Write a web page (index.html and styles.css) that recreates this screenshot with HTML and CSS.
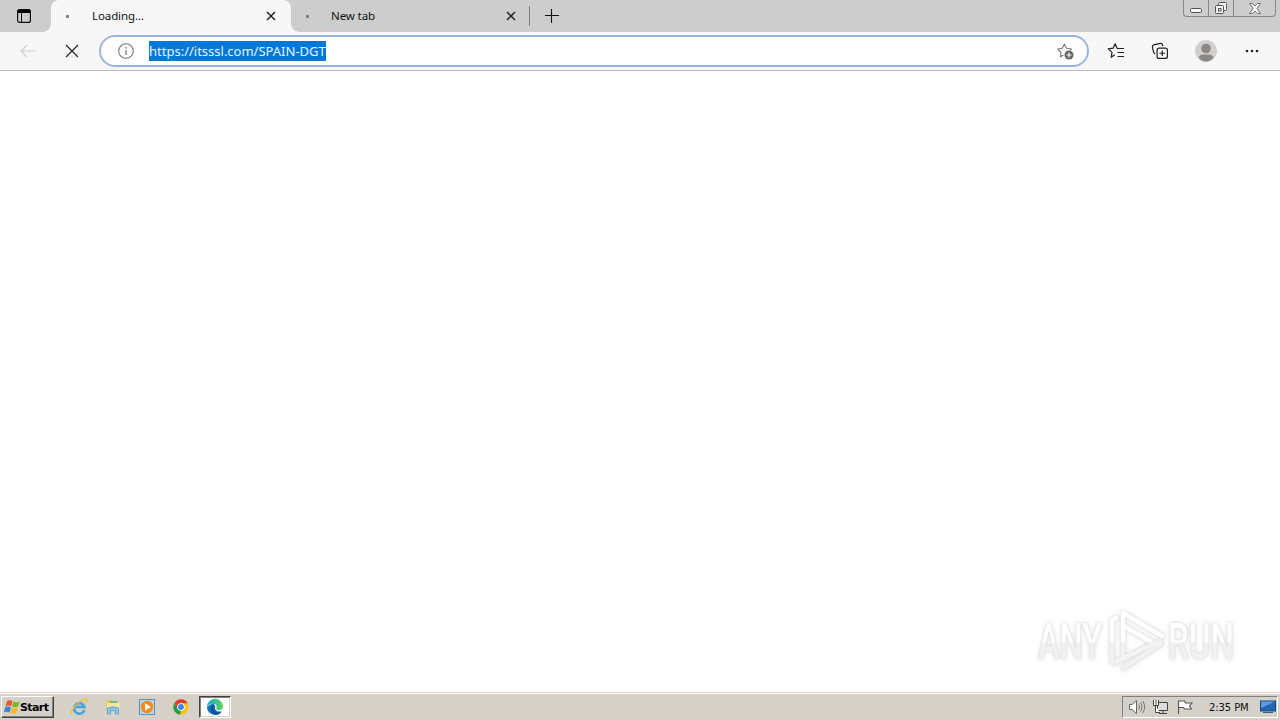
FILE: index.html
```html
<!DOCTYPE html>
<html lang="en">
<head>
    <meta charset="UTF-8">
    <meta name="viewport" content="width=device-width, initial-scale=1.0">
    <title>New tab</title>
    <link rel="stylesheet" href="styles.css">
</head>
<body>
    <header class="tab-strip">
        <div class="tab-actions">
            <svg width="16" height="16" viewBox="0 0 16 16"><rect x="1.6" y="1.6" width="12.8" height="12.8" rx="2" fill="none" stroke="#111" stroke-width="1.2"/><path d="M1.5 5V3.2Q1.5 1.5 3.2 1.5H12.8Q14.5 1.5 14.5 3.2V5Z" fill="#000"/><path d="M5.5 5V14" stroke="#111"/></svg>
        </div>
        <div class="tab active">
            <span class="spinner"></span>
            <span class="tab-title">Loading...</span>
            <svg class="tab-close" width="10" height="10" viewBox="0 0 10 10"><path d="M1 1L9 9M9 1L1 9" stroke="#222" stroke-width="1.5"/></svg>
        </div>
        <div class="tab">
            <span class="spinner"></span>
            <span class="tab-title">New tab</span>
            <svg class="tab-close" width="10" height="10" viewBox="0 0 10 10"><path d="M1 1L9 9M9 1L1 9" stroke="#222" stroke-width="1.5"/></svg>
        </div>
        <svg class="new-tab" width="14" height="14" viewBox="0 0 14 14"><path d="M0 6.5H14M6.5 0V14" stroke="#111" stroke-width="1.1"/></svg>
        <div class="window-buttons">
            <span class="win-btn minimize"><svg width="12" height="5" viewBox="0 0 12 5"><rect x=".5" y=".5" width="11" height="4" rx="1" fill="#f6f6f6" stroke="#555"/></svg></span>
            <span class="win-btn restore"><svg width="14" height="14" viewBox="0 0 14 14"><g fill="#f2f2f2" stroke="#555"><rect x="4.5" y="1.5" width="8" height="8" rx="1"/><rect x="1.5" y="4.5" width="8" height="8" rx="1"/><rect x="4.5" y="7.5" width="2.5" height="2.5"/></g></svg></span>
            <span class="win-btn close"><svg width="12" height="11" viewBox="0 0 12 11"><path d="M.5 .5H3.7L6 3L8.3 .5H11.5L7.9 5.5L11.5 10.5H8.3L6 8L3.7 10.5H.5L4.1 5.5Z" fill="#f4f4f4" stroke="#666" stroke-width=".9"/></svg></span>
        </div>
    </header>

    <nav class="toolbar">
        <svg class="back" width="16" height="14" viewBox="0 0 16 14"><path d="M16 7H1M7 1L1 7L7 13" fill="none" stroke="#cfcfcf" stroke-width="1.2"/></svg>
        <svg class="stop" width="14" height="14" viewBox="0 0 14 14"><path d="M1 1L13 13M13 1L1 13" stroke="#222" stroke-width="1.2"/></svg>
        <div class="address-bar">
            <svg width="16" height="16" viewBox="0 0 16 16"><circle cx="8" cy="8" r="7.3" fill="none" stroke="#777" stroke-width="1.1"/><path d="M8 7V12M8 4V5.6" stroke="#777" stroke-width="1.3"/></svg>
            <span class="url">https://itsssl.com/SPAIN-DGT</span>
            <svg class="add-favorite" width="19" height="18" viewBox="0 0 19 18"><path d="M7.5 13L4.4 14.8L5 10.4L1.8 7L6.2 6.3L8.4 2.2L10.6 6.3L15.4 7L14 8.3" fill="none" stroke="#777" stroke-width="1.1" stroke-linejoin="round"/><circle cx="13" cy="13" r="4.5" fill="#656565"/><path d="M10.5 13H15.5M13 10.5V15.5" stroke="#fff" stroke-width="1.1"/></svg>
        </div>
        <svg class="favorites" width="18" height="18" viewBox="0 0 18 18"><path d="M7.8 12.8L4.2 15.3L5 10.4L1.2 6.9L6.2 6.2L8.1 1.8L10.2 6.5H17M10.5 10.5H17M10.5 14.5H17" fill="none" stroke="#222" stroke-width="1.2" stroke-linejoin="round"/></svg>
        <svg class="collections" width="18" height="18" viewBox="0 0 18 18"><g fill="none" stroke="#222" stroke-width="1.2"><rect x="6.1" y="6.1" width="10.3" height="10.3" rx="2"/><path d="M11.25 8.5V14M8.5 11.25H14M4.2 12L3 10.8Q2.6 10.4 2.4 9.6L1.4 5Q1.2 3.4 2.7 2.9L9.3 1.4Q10.8 1.2 11.4 2.5L12 4.2"/></g></svg>
        <svg class="profile" width="22" height="22" viewBox="0 0 22 22"><circle cx="11" cy="11" r="11" fill="#d2d0ce"/><circle cx="11" cy="8.5" r="4.8" fill="#8a8785"/><path d="M3.5 17.2Q5 14.5 7.5 14.5H14.5Q17 14.5 18.5 17.2Q15.5 21.5 11 21.5T3.5 17.2Z" fill="#8a8785"/></svg>
        <svg class="more" width="14" height="4" viewBox="0 0 14 4"><g fill="#222"><circle cx="2" cy="2" r="1.3"/><circle cx="7" cy="2" r="1.3"/><circle cx="12" cy="2" r="1.3"/></g></svg>
    </nav>

    <main class="page">
        <svg class="watermark" width="204" height="70" viewBox="0 0 204 70">
            <defs>
                <linearGradient id="fade" gradientUnits="userSpaceOnUse" x1="0" y1="0" x2="0" y2="70"><stop offset=".53" stop-color="#fff"/><stop offset=".54" stop-color="#f1f1f1"/></linearGradient>
            </defs>
            <g fill="url(#fade)">
                <text x="5" y="54" textLength="64" lengthAdjust="spacingAndGlyphs">ANY</text>
                <text x="135" y="54" textLength="66" lengthAdjust="spacingAndGlyphs">RUN</text>
            </g>
            <g fill="none" stroke="url(#fade)" stroke-width="4.5" stroke-linejoin="round" stroke-linecap="round">
                <path d="M83 13L79 15V56"/>
                <path d="M90 51V8L129 31"/>
                <path d="M91 21L118 37"/>
                <path d="M80 58L127 36" stroke="#f3f3f3"/>
                <path d="M90 63L128 39" stroke="#f1f1f1"/>
            </g>
        </svg>
    </main>

    <footer class="taskbar">
        <div class="start">
            <svg width="17" height="16" viewBox="0 0 17 16"><path d="M3 2Q6 .5 8.5 2.2L7.2 7.3Q4.5 5.8 1.5 7.2Z" fill="#e9582b"/><path d="M9.4 2.5Q12.5 4 15.8 2.2L14.2 7.5Q11.2 9 8.1 7.6Z" fill="#79b829"/><path d="M1.3 8.1Q4.3 6.8 7 8.3L5.5 13.6Q3 12 0 13.2Z" fill="#3c83cb"/><path d="M7.9 8.6Q11 10.1 14 8.6L12.5 13.7Q9.5 15.2 6.4 13.8Z" fill="#f7b818"/></svg>
            <span>Start</span>
        </div>
        <div class="launcher">
            <svg width="18" height="18" viewBox="0 0 18 18"><path d="M14.5 11.8A5.3 5.3 0 1 1 14.5 9H5" fill="none" stroke="#42a5dc" stroke-width="2.6"/><path d="M2 16Q-.5 14.5 5 8.2Q11.5 1 16.2 1.2Q17.8 2 15.6 5" fill="none" stroke="#edbd38" stroke-width="1.3"/></svg>
            <svg width="18" height="18" viewBox="0 0 18 18"><path d="M2 4V2H7L8 4H15V13H2Z" fill="#e9c967"/><path d="M3 5H15.5V12H3Z" fill="#f9e8a4"/><path d="M6 3H13V5H6Z" fill="#74b783"/><path d="M3.5 16V10Q9 7.5 14.5 10V16H11.5V12.5H6.5V16Z" fill="#8cc6e6" stroke="#4b9bc8" stroke-width=".7"/></svg>
            <svg width="18" height="18" viewBox="0 0 18 18"><rect x="1.5" y="1.5" width="15" height="15" fill="#b9d5eb" stroke="#5c94bd"/><circle cx="9" cy="9" r="6.2" fill="#f28b17"/><path d="M7 5.2V12.8L13 9Z" fill="#fff"/></svg>
            <svg width="18" height="18" viewBox="0 0 18 18"><circle cx="9" cy="9" r="7.7" fill="#fbc116"/><path d="M2.3 5.2A7.7 7.7 0 0 1 15.7 5.2H9L6 11Z" fill="#df3c30"/><path d="M2.3 5.2L6 11L9 13L8 16.7A7.7 7.7 0 0 1 2.3 5.2Z" fill="#259c4b"/><circle cx="9" cy="9" r="3.8" fill="#fff"/><circle cx="9" cy="9" r="2.9" fill="#4083e7"/></svg>
        </div>
        <div class="task-button">
            <svg width="18" height="18" viewBox="0 0 18 18">
                <defs><linearGradient id="edge"><stop stop-color="#19a8dc"/><stop offset="1" stop-color="#5ed34e"/></linearGradient></defs>
                <path d="M1 9A8 8 0 0 0 11 16.7Q14 16.2 15.8 13.2Q12 14.3 9.8 12Q8.4 10.5 9.5 8.5L7 5Z" fill="#1474bd"/>
                <path d="M1 9A8 8 0 0 1 17 8.5Q17 12 13 12Q9.5 12 10.6 9.4Q11 6 7 6Q3 6 1 9Z" fill="url(#edge)"/>
                <path d="M7 7Q4 9 5 12.5Q6.5 16.5 11 16.7Q14 16.2 15.5 13.8Q12 15.5 9 13.2Q6 10.5 8 7.5Z" fill="#134c91"/>
            </svg>
        </div>
        <div class="tray">
            <svg width="18" height="16" viewBox="0 0 18 16"><path d="M1.5 5.5H4L8.5 1.5V14.5L4 10.5H1.5Z" fill="#fff" stroke="#666"/><path d="M10.7 5.5Q12.3 8 10.7 10.5M12.7 3.5Q15.5 8 12.7 12.5M14.8 2Q18.5 8 14.8 14" fill="none" stroke="#777"/></svg>
            <svg width="18" height="16" viewBox="0 0 18 16"><path d="M5.5 3.5H15.5V11.5H5.5Z" fill="#ddd" stroke="#444"/><path d="M11 12V14M7 14.5H15" stroke="#444"/><path d="M1.5 1V6.5H6.5V1M4 1V6M3.5 6.5V13.5H8" fill="#fff" stroke="#444"/></svg>
            <svg width="18" height="16" viewBox="0 0 18 16"><path d="M2.5 15V1.5M2.5 2H8.5L9.5 4H16L13.5 7L15.5 10H8.5L7.5 8.5H2.5" fill="#fff" stroke="#555" stroke-width="1.1"/></svg>
            <span class="clock">2:35 PM</span>
            <svg class="desktop" width="16" height="14" viewBox="0 0 16 14"><rect x=".5" y="1" width="15" height="10" fill="#2465b4" stroke="#164783"/><path d="M1 1.5H15L1 8Z" fill="#5d9bdb"/><path d="M3 12.5H13" stroke="#39597e"/></svg>
        </div>
    </footer>
</body>
</html>
```
FILE: styles.css
```css
* {
    margin: 0;
    padding: 0;
    box-sizing: border-box;
}
body {
    width: 1280px;
    height: 720px;
    overflow: hidden;
    display: flex;
    flex-direction: column;
    background: #fff;
    color: #111;
    font-family: "Noto Sans", "Open Sans", sans-serif;
    font-size: 12px;
}
svg {
    display: block;
    flex: none;
}
.tab-strip {
    height: 32px;
    display: flex;
    align-items: center;
    background: #cdcdcd;
}
.tab-actions {
    width: 51px;
    padding-left: 16px;
}
.tab {
    width: 240px;
    height: 32px;
    display: flex;
    align-items: center;
    padding: 0 15px;
    position: relative;
}
.tab.active {
    background: #f7f7f7;
    border-radius: 8px 8px 0 0;
}
.tab.active::before,
.tab.active::after {
    content: "";
    position: absolute;
    bottom: 0;
    width: 8px;
    height: 8px;
}
.tab.active::before {
    left: -8px;
    background: radial-gradient(circle at 0 0, transparent 7.5px, #f7f7f7 8px);
}
.tab.active::after {
    right: -8px;
    background: radial-gradient(circle at 100% 0, transparent 7.5px, #f7f7f7 8px);
}
.spinner {
    width: 3px;
    height: 3px;
    border-radius: 1px;
    background: #777;
}
.tab-title {
    margin-left: 23px;
    font-size: 11.5px;
    letter-spacing: -0.1px;
    line-height: 16px;
}
.tab-close {
    margin-left: auto;
}
.tab + .tab {
    width: 239px;
    padding-right: 14px;
}
.tab + .tab .tab-title {
    margin-left: 22px;
}
.tab + .tab::after {
    content: "";
    position: absolute;
    right: 0;
    top: 6px;
    width: 1px;
    height: 20px;
    background: #808080;
}
.new-tab {
    margin-left: 15px;
}
.window-buttons {
    align-self: flex-start;
    display: flex;
    width: 93px;
    height: 17px;
    margin-left: auto;
    margin-right: 4px;
    border: 1px solid #888;
    border-top: 0;
    border-radius: 0 0 4px 4px;
}
.win-btn {
    width: 25px;
    display: flex;
    justify-content: center;
    align-items: center;
    border-right: 1px solid #888;
}
.win-btn.minimize {
    padding-top: 5px;
}
.win-btn.close {
    flex: 1;
    border-right: 0;
}
.toolbar {
    height: 39px;
    display: flex;
    align-items: center;
    background: #f7f7f7;
    border-bottom: 1px solid #bcbcbc;
}
.back {
    margin-left: 20px;
}
.stop {
    margin-left: 29px;
}
.address-bar {
    width: 990px;
    height: 32px;
    margin-left: 20px;
    padding: 0 12px 0 17px;
    display: flex;
    align-items: center;
    background: #fff;
    border: 2px solid #9bb5df;
    border-radius: 16px;
}
.url {
    width: 177px;
    margin-left: 15px;
    height: 20px;
    line-height: 20px;
    font-size: 13px;
    white-space: nowrap;
    background: #0078d7;
    color: #e8f4fd;
}
.add-favorite {
    margin-left: auto;
}
.favorites {
    margin-left: 18px;
}
.collections {
    margin-left: 26px;
}
.profile {
    margin-left: 26px;
}
.more {
    margin-left: 28px;
}
.page {
    height: 621px;
    display: flex;
    justify-content: flex-end;
    align-items: flex-end;
    padding: 0 43px 17px 0;
}
.watermark {
    overflow: visible;
    font-family: "Roboto", "Liberation Sans", sans-serif;
    font-size: 50px;
    font-weight: 500;
    filter: drop-shadow(0 0 1px #d8d8d8) drop-shadow(0 0 2px #e4e4e4);
}
.taskbar {
    height: 28px;
    display: flex;
    align-items: center;
    padding: 3px 2px 1px 1px;
    background: #d5d1c9;
    box-shadow: inset 0 1px #d5d1c9, inset 0 2px #fff;
    font-family: "DejaVu Sans", sans-serif;
    font-size: 10px;
}
.start {
    width: 53px;
    height: 22px;
    display: flex;
    align-items: center;
    padding-left: 2px;
    border: 1px solid;
    border-color: #fff #404040 #404040 #fff;
    box-shadow: inset -1px -1px #808080;
    font-size: 11px;
    font-weight: bold;
    color: #000;
}
.start span {
    letter-spacing: -0.6px;
    margin-left: -1px;
}
.launcher {
    display: flex;
    gap: 16px;
    margin-left: 16px;
}
.task-button {
    width: 32px;
    height: 22px;
    display: flex;
    justify-content: center;
    align-items: center;
    margin-left: 9px;
    background: #fff;
    border: 1px solid;
    border-color: #404040 #fff #fff #404040;
    box-shadow: inset 1px 1px #808080, inset -1px -1px #d5d1c9;
}
.tray {
    width: 156px;
    height: 22px;
    display: flex;
    align-items: center;
    margin-left: auto;
    padding-left: 5px;
    border: 1px solid;
    border-color: #808080 #fff #fff #808080;
}
.tray svg + svg {
    margin-left: 6px;
}
.clock {
    margin-left: 15px;
    white-space: nowrap;
    letter-spacing: -0.1px;
}
.desktop {
    margin-left: auto;
    margin-right: 1px;
}
```
